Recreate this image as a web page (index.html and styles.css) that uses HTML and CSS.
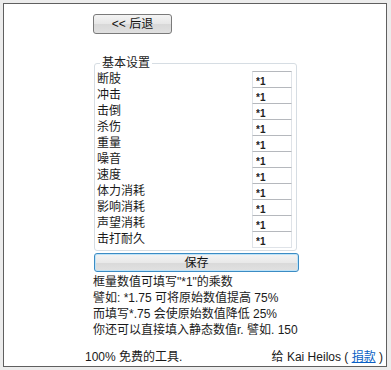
FILE: index.html
```html
<!DOCTYPE html>
<html lang="zh-CN">
<head>
  <meta charset="UTF-8"/>
  <title>设置</title>
  <link rel="stylesheet" href="styles.css">
</head>
<body>
<div class="frame">
  <div class="content">
    <button type="button" class="back-btn">&lt;&lt; 后退</button>
    <fieldset class="settings">
      <legend>基本设置</legend>
      <div class="row"><span>断肢</span><input type="text" value="*1"></div>
      <div class="row"><span>冲击</span><input type="text" value="*1"></div>
      <div class="row"><span>击倒</span><input type="text" value="*1"></div>
      <div class="row"><span>杀伤</span><input type="text" value="*1"></div>
      <div class="row"><span>重量</span><input type="text" value="*1"></div>
      <div class="row"><span>噪音</span><input type="text" value="*1"></div>
      <div class="row"><span>速度</span><input type="text" value="*1"></div>
      <div class="row"><span>体力消耗</span><input type="text" value="*1"></div>
      <div class="row"><span>影响消耗</span><input type="text" value="*1"></div>
      <div class="row"><span>声望消耗</span><input type="text" value="*1"></div>
      <div class="row"><span>击打耐久</span><input type="text" value="*1"></div>
    </fieldset>
    <button type="button" class="save-btn">保存</button>
    <div class="help">
      <p>框量数值可填写"*1"的乘数</p>
      <p>譬如: *1.75 可将原始数值提高 75%</p>
      <p>而填写*.75 会使原始数值降低 25%</p>
      <p>你还可以直接填入静态数值r. 譬如. 150</p>
    </div>
  </div>
  <div class="footer">
    <span>100% 免费的工具.</span>
    <span>给 Kai Heilos ( <a href="#">捐款</a> )</span>
  </div>
</div>
</body>
</html>
```
FILE: styles.css
```css
body { margin:0; background:#ececec; font-family:"Liberation Sans","Noto Sans CJK SC",sans-serif; font-size:12px; color:#1a1a1a; }
.frame { box-sizing:border-box; margin:3px; width:384px; height:364px; background:#fff; border:1px solid #5f5f5f; }
.content { padding:10px 0 0 89px; }

.back-btn { display:block; box-sizing:border-box; width:79px; height:20px; padding:0; font:12px/16px "Liberation Sans","Noto Sans CJK SC",sans-serif; color:#111; border:1px solid #7a7a7a; border-radius:3px; background:linear-gradient(#f4f4f4,#e6e6e6 50%,#d8d8d8 51%,#e0e0e0); }

.settings { box-sizing:border-box; width:203px; margin:22px 0 0 1px; padding:1px 4px 3px 2px; border:1px solid #d6dde3; border-radius:3px; min-width:0; }
.settings legend { margin-left:3px; padding:0 2px; line-height:14px; color:#222; }
.row { display:flex; justify-content:space-between; height:16px; line-height:14px; }
.row span { padding-top:1px; }
.row input { box-sizing:border-box; width:40px; height:17px; margin:0; padding:4px 0 0 3px; border:1px solid #dfe3e8; border-top-color:#b5b8bd; font:bold 10px/10px "Liberation Sans",sans-serif; color:#222; outline:none; }

.save-btn { display:block; box-sizing:border-box; width:205px; height:19px; margin:2px 0 0 1px; padding:0; font:12px/16px "Liberation Sans","Noto Sans CJK SC",sans-serif; color:#111; border:1px solid #3b8cc4; border-radius:3px; background:linear-gradient(#f3f3f3,#e9e9e9 50%,#d9d9d9 51%,#e1e1e1); box-shadow:inset 0 0 0 1px #bfe3f8; }

.help { margin-top:2px; }
.help p { margin:0; line-height:16px; }

.footer { display:flex; justify-content:space-between; margin-top:12px; padding:0 3px 0 81px; line-height:14px; white-space:nowrap; }
.footer a { color:#0a5fc4; }
```
